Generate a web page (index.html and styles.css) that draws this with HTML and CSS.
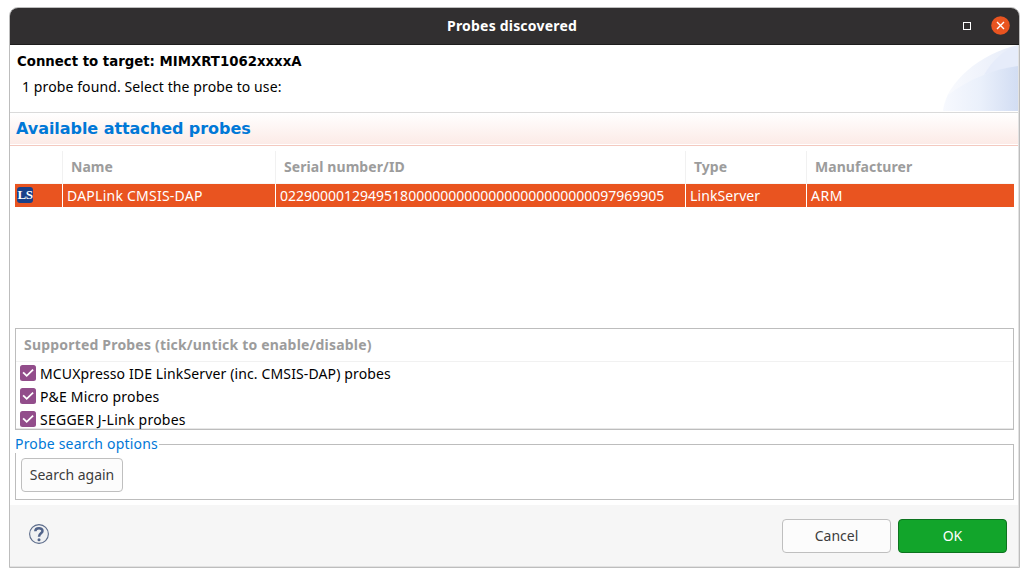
FILE: index.html
```html
<!DOCTYPE html>
<html lang="en">
<head>
<meta charset="utf-8">
<title>Probes discovered</title>
<link rel="stylesheet" href="styles.css">
</head>
<body>
<main class="window">
  <header class="titlebar">
    <h1 class="title">Probes discovered</h1>
    <div class="controls">
      <span class="maximize"></span>
      <svg class="close" viewBox="0 0 19 19"><circle cx="9.5" cy="9.5" r="9.3" fill="#e95420"/><path d="M6 6l7 7M13 6l-7 7" stroke="#fff" stroke-width="1.4"/></svg>
    </div>
  </header>
  <section class="banner">
    <div>
      <h2 class="target">Connect to target: MIMXRT1062xxxxA</h2>
      <p class="message">1 probe found. Select the probe to use:</p>
    </div>
    <svg class="art" viewBox="0 0 75 66">
      <defs>
        <linearGradient id="a"><stop offset="0" stop-color="#fafbfe"/><stop offset="1" stop-color="#e6ecf9"/></linearGradient>
        <linearGradient id="b"><stop offset="0" stop-color="#f7f9fe"/><stop offset=".5" stop-color="#eaf0fb"/><stop offset="1" stop-color="#d2ddf3"/></linearGradient>
      </defs>
      <path d="M0 66C2 38 38 8 75 0V66Z" fill="url(#a)"/>
      <path d="M41 30C49 16 60 5 75 0V22C62 23 52 26 41 30Z" fill="#e6ecfa"/>
      <path d="M0 66C1 60 3 55 5 50C26 34 51 24 75 21V66Z" fill="url(#b)"/>
    </svg>
  </section>
  <h3 class="section-title"><span>Available attached probes</span></h3>
  <div class="content">
    <div class="table">
      <div class="row head"><span></span><span>Name</span><span class="w-serial">Serial number/ID</span><span>Type</span><span class="w-maker">Manufacturer</span></div>
      <div class="row selected"><span class="icon-cell"><b class="ls">LS</b></span><span class="v-name">DAPLink CMSIS-DAP</span><span>022900001294951800000000000000000000000097969905</span><span class="v-type">LinkServer</span><span class="v-maker">ARM</span></div>
    </div>
    <section class="supported">
      <h4 class="supported-title">Supported Probes (tick/untick to enable/disable)</h4>
      <ul class="checks">
        <li><svg class="check" viewBox="0 0 16 16"><rect width="16" height="16" rx="2.5" fill="#924d8b"/><path d="M3.1 7.3l3.6 3.5 6.4-6.2" fill="none" stroke="#fff" stroke-width="1.8"/></svg><span class="c1">MCUXpresso IDE LinkServer (inc. CMSIS-DAP) probes</span></li>
        <li><svg class="check" viewBox="0 0 16 16"><rect width="16" height="16" rx="2.5" fill="#924d8b"/><path d="M3.1 7.3l3.6 3.5 6.4-6.2" fill="none" stroke="#fff" stroke-width="1.8"/></svg><span class="c2">P&amp;E Micro probes</span></li>
        <li><svg class="check" viewBox="0 0 16 16"><rect width="16" height="16" rx="2.5" fill="#924d8b"/><path d="M3.1 7.3l3.6 3.5 6.4-6.2" fill="none" stroke="#fff" stroke-width="1.8"/></svg><span class="c3">SEGGER J-Link probes</span></li>
      </ul>
    </section>
    <fieldset class="options">
      <legend>Probe search options</legend>
      <button class="btn search">Search again</button>
    </fieldset>
  </div>
  <footer class="footer">
    <svg class="help" viewBox="0 0 20 20"><circle cx="10" cy="10" r="9.4" fill="#f0f1f2" stroke="#5b6b8a" stroke-width="1.1"/><path d="M6.3 7.2C6.4 3.4 13.5 3.2 13.5 7C13.5 9.5 10 9.3 10 12.8" fill="none" stroke="#52648a" stroke-width="2.5"/><circle cx="10" cy="15.7" r="1.5" fill="#52648a"/></svg>
    <div class="actions"><button class="btn cancel">Cancel</button><button class="btn ok">OK</button></div>
  </footer>
</main>
</body>
</html>
```
FILE: styles.css
```css
* { box-sizing: border-box; }
body { margin: 0; padding: 7px 9px 0; background: #fff; color: #000; font: 14px/20px "Noto Sans", "Open Sans", sans-serif; overflow: hidden; }
h1, h2, h3, h4, p, ul { margin: 0; padding: 0; }
span, h1, h2, h4, p, button, legend { white-space: nowrap; }
.window { width: 1011px; height: 561px; border: 1px solid #bdbdbd; border-radius: 9px 9px 0 0; overflow: hidden; display: flex; flex-direction: column; box-shadow: inset -1px -1px #e2e2e2; }
.titlebar { height: 37px; flex: none; background: #312f30; border-bottom: 1px solid #1e1d1d; display: grid; grid-template-columns: 1fr auto 1fr; align-items: center; padding-bottom: 1px; }
.title { grid-column: 2; font-size: 14px; line-height: 22px; font-weight: 700; color: #fff; letter-spacing: .2px; margin-right: 5px; padding-top: 1px; }
.controls { display: flex; justify-content: flex-end; align-items: center; gap: 20px; padding-right: 9px; }
.maximize { width: 8px; height: 8px; border: 1px solid #fff; }
.close { width: 19px; height: 19px; }
.banner { height: 67px; flex: none; display: flex; justify-content: space-between; padding: 0 1px 0 7px; }
.target { font: 700 13.3px/20px "DejaVu Sans", sans-serif; padding-top: 7px; }
.message { padding: 5px 0 0 5px; letter-spacing: .1px; }
.art { width: 75px; height: 66px; }
.section-title { height: 34px; flex: none; margin-right: 1px; border-top: 1px solid #dadada; border-bottom: 1px solid #f4c9bf; background: linear-gradient(#fff, #fcebe7) 0 0 / 100% 31px no-repeat; font: 700 16px/31px "DejaVu Sans", sans-serif; letter-spacing: -.05px; color: #0078d7; padding-left: 6px; }
.content { flex: none; height: 359px; padding: 5px 5px 0; display: flex; flex-direction: column; }
.table { height: 177px; flex: none; }
.row { display: grid; grid-template-columns: 47px 213px 410px 121px 1fr; width: 999px; }
.row > span + span { border-left: 1px solid #f1f1f1; padding-left: 8px; }
.head { height: 33px; line-height: 32px; font-weight: 700; color: #9c9c9c; border-bottom: 1px solid #f7f7f7; }
.w-serial { letter-spacing: .08px; }
.w-maker { letter-spacing: .05px; }
.selected { height: 23px; line-height: 24px; background: #e95420; color: #fff; }
.selected > span + span { border-left-color: #fff; padding-left: 4px; }
.v-name { letter-spacing: .24px; }
.v-type { letter-spacing: .1px; }
.v-maker { letter-spacing: .6px; }
.icon-cell { display: flex; padding: 3px 0 0 2px; }
.ls { width: 16px; height: 16px; background: #1a4089; border-radius: 3px; font: 700 13px/16px "Liberation Serif", serif; text-align: center; letter-spacing: -.5px; }
.supported { width: 999px; height: 102px; flex: none; border: 1px solid #bdbdbd; box-shadow: inset 0 -1px #e7e7e7; }
.supported-title { height: 33px; border-bottom: 1px solid #f1f1f1; font-size: 14px; line-height: 32px; letter-spacing: .19px; color: #9c9c9c; padding-left: 8px; }
.checks { list-style: none; padding: 0 0 0 4px; }
.checks li { height: 23px; display: flex; align-items: flex-start; gap: 4px; padding-top: 1px; line-height: 22px; }
.check { width: 16px; height: 16px; margin-top: 2px; }
.c1 { letter-spacing: .13px; }
.c2 { letter-spacing: .19px; }
.c3 { letter-spacing: .25px; }
.options { width: 999px; height: 65px; margin: 5px 0 0; padding: 0 5px; border: 1px solid #bdbdbd; min-width: 0; flex: none; }
.options legend { margin-left: -6px; padding: 0 1px 0 0; height: 18px; line-height: 18px; letter-spacing: .19px; color: #0078d7; background: #fff; }
.btn { display: block; height: 34px; border: 1px solid #bfbfbf; border-radius: 4px; background: #fcfcfc; color: #3d3d3d; font: 14px/20px "Noto Sans", sans-serif; padding: 0; }
.search { width: 102px; margin-top: 5px; }
.footer { flex: 1; margin: 0 1px 1px 0; background: #f6f6f6; display: flex; justify-content: space-between; padding: 14px 11px 0 19px; }
.help { width: 20px; height: 20px; margin-top: 5px; }
.actions { display: flex; gap: 7px; }
.cancel, .ok { width: 109px; }
.ok { background: #12a52b; border-color: #0c731e; color: #fff; }
```
